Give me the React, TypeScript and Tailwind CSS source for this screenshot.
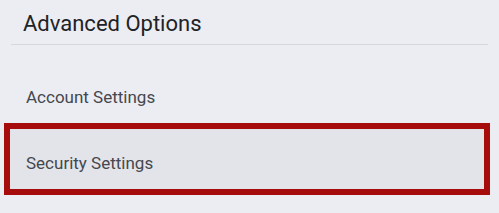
import React from "react";

export default function App() {
  return (
    <div className="min-h-screen w-full bg-[#ecedf2] font-['Roboto',sans-serif]">
      {/* Header */}
      <div className="mx-[11px] h-[45px] border-b border-[#d6d7dc] pl-[12px] pt-[10px]">
        <h2 className="text-[22px] leading-[28px] font-normal text-[#212226]">Advanced Options</h2>
      </div>

      {/* Options list */}
      <div className="mt-[22px] ml-[10px] mr-[15px] flex flex-col gap-[2px]">
        <div className="h-[60px] pl-[16px] pt-[20px] text-[17px] leading-[20px] text-[#45474e]">
          Account Settings
        </div>
        <div className="h-[60px] pl-[16px] pt-[24px] text-[17px] leading-[20px] text-[#45474e] bg-[#e3e4e9] outline-solid outline-[length:6px] outline-[#a60c0c]">
          Security Settings
        </div>
      </div>
    </div>
  );
}
